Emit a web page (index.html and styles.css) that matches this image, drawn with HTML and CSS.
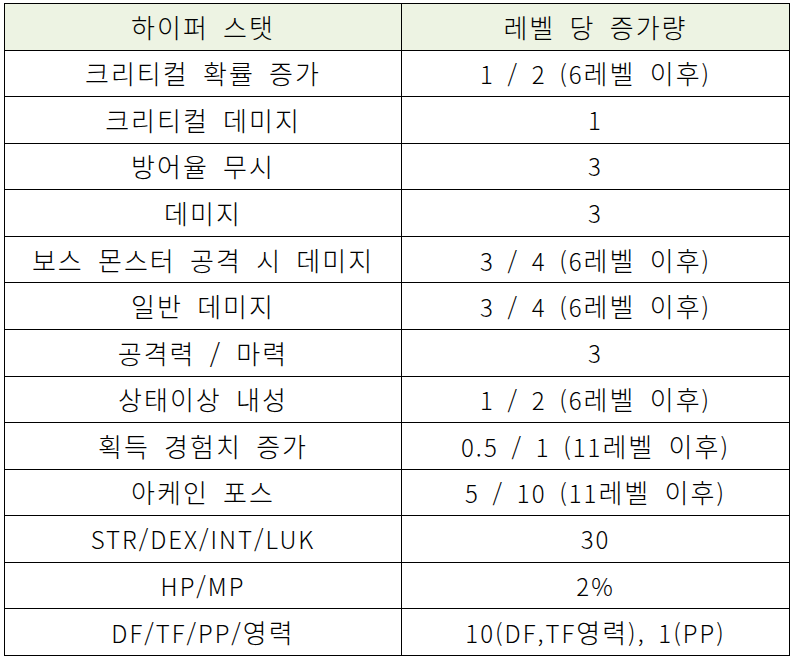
FILE: index.html
```html
<!DOCTYPE html>
<html lang="ko">
<head>
<meta charset="utf-8">
<link rel="stylesheet" href="styles.css">
</head>
<body>
<table class="stat-table">
  <colgroup><col class="c1"><col class="c2"></colgroup>
  <thead>
    <tr class="head"><th class="ko">하이퍼 스탯</th><th class="ko">레벨 당 증가량</th></tr>
  </thead>
  <tbody>
    <tr><td class="ko">크리티컬 확률 증가</td><td>1 / 2 (6<span class="ko">레벨 이후</span>)</td></tr>
    <tr><td class="ko">크리티컬 데미지</td><td>1</td></tr>
    <tr><td class="ko">방어율 무시</td><td>3</td></tr>
    <tr><td class="ko">데미지</td><td>3</td></tr>
    <tr><td class="ko">보스 몬스터 공격 시 데미지</td><td>3 / 4 (6<span class="ko">레벨 이후</span>)</td></tr>
    <tr><td class="ko">일반 데미지</td><td>3 / 4 (6<span class="ko">레벨 이후</span>)</td></tr>
    <tr><td class="ko">공격력 / 마력</td><td>3</td></tr>
    <tr><td class="ko">상태이상 내성</td><td>1 / 2 (6<span class="ko">레벨 이후</span>)</td></tr>
    <tr><td class="ko">획득 경험치 증가</td><td>0.5 / 1 (11<span class="ko">레벨 이후</span>)</td></tr>
    <tr><td class="ko">아케인 포스</td><td>5 / 10 (11<span class="ko">레벨 이후</span>)</td></tr>
    <tr><td>STR/DEX/INT/LUK</td><td>30</td></tr>
    <tr><td>HP/MP</td><td>2%</td></tr>
    <tr><td>DF/TF/PP/<span class="ko">영력</span></td><td>10(DF,TF<span class="ko">영력</span>), 1(PP)</td></tr>
  </tbody>
</table>
</body>
</html>
```
FILE: styles.css
```css
html, body {
  margin: 0;
  padding: 0;
  background: #ffffff;
}
.stat-table {
  margin: 3px 0 0 4px;
  width: 785px;
  border-collapse: collapse;
  table-layout: fixed;
  font-family: "Noto Sans CJK KR", "Noto Sans", sans-serif;
  font-size: 24px;
  font-weight: 300;
  color: #000000;
}
.c1 { width: 397px; }
.c2 { width: 388px; }
.stat-table th,
.stat-table td {
  border: 1px solid #000000;
  height: 45.57px;
  padding: 0;
  text-align: center;
  vertical-align: middle;
  font-weight: 300;
  letter-spacing: 2px;
  word-spacing: 4px;
  line-height: 1;
  white-space: nowrap;
}
.stat-table .ko {
  font-size: 26px;
  letter-spacing: 2px;
  word-spacing: 5px;
}
.head th {
  background: #edf3e3;
}
```
